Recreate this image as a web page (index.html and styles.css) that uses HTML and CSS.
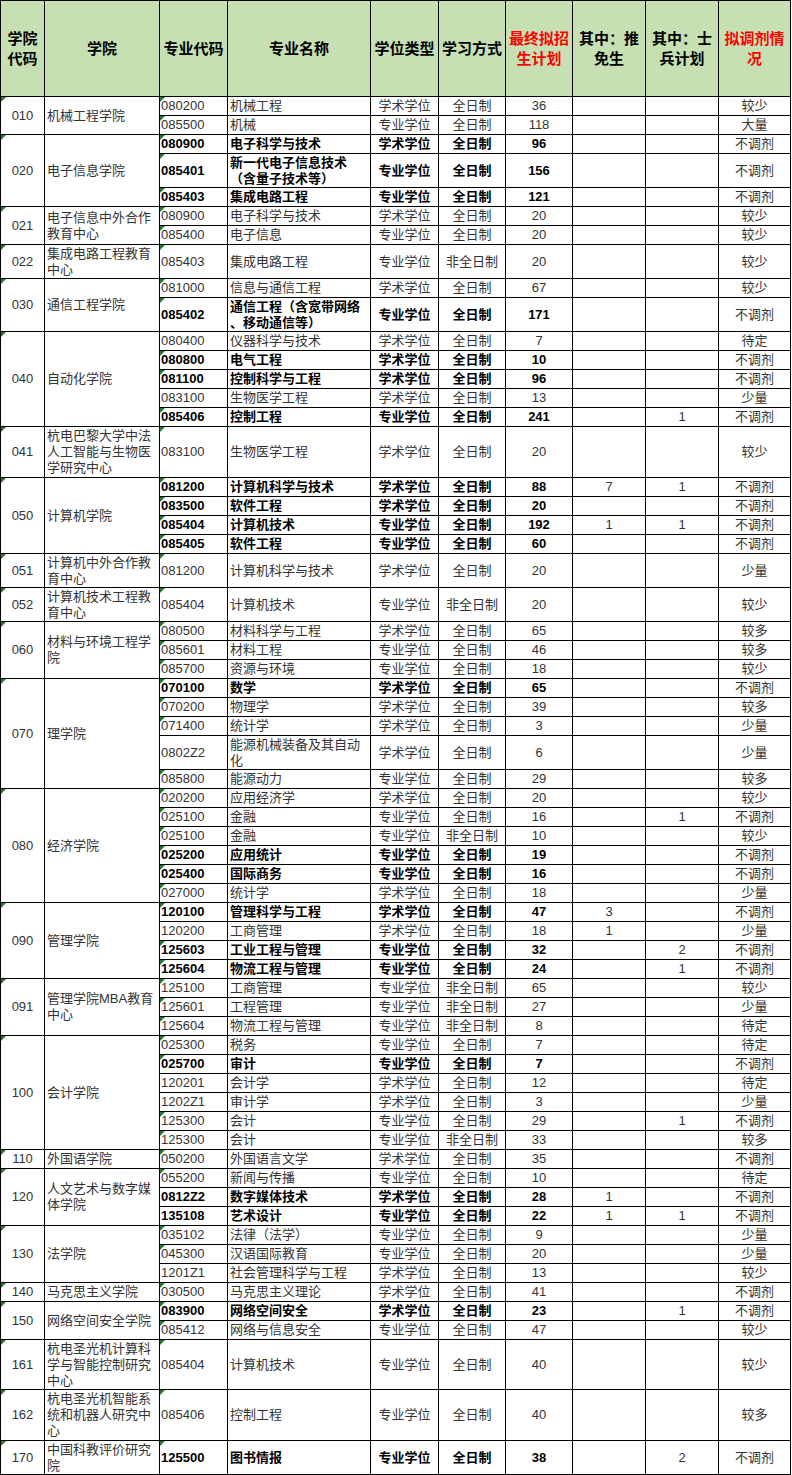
FILE: index.html
```html
<!DOCTYPE html>
<html lang="zh-CN">
<head>
<meta charset="utf-8">
<title>招生计划</title>
<link rel="stylesheet" href="styles.css">
</head>
<body>
<div class="g">
  <div class="h">学院<br>代码</div>
  <div class="h">学院</div>
  <div class="h">专业代码</div>
  <div class="h">专业名称</div>
  <div class="h">学位类型</div>
  <div class="h">学习方式</div>
  <div class="h red">最终拟招<br>生计划</div>
  <div class="h">其中：推<br>免生</div>
  <div class="h">其中：士<br>兵计划</div>
  <div class="h red">拟调剂情<br>况</div>

  <!-- 010 -->
  <div class="k tri r2">010</div><div class="n r2">机械工程学院</div>
  <div class="c tri">080200</div><div class="m">机械工程</div><div class="x">学术学位</div><div class="x">全日制</div><div class="x">36</div><div class="x"></div><div class="x"></div><div class="x">较少</div>
  <div class="c tri">085500</div><div class="m">机械</div><div class="x">专业学位</div><div class="x">全日制</div><div class="x">118</div><div class="x"></div><div class="x"></div><div class="x">大量</div>

  <!-- 020 -->
  <div class="k tri r3">020</div><div class="n r3">电子信息学院</div>
  <div class="c tri b">080900</div><div class="m b">电子科学与技术</div><div class="x b">学术学位</div><div class="x b">全日制</div><div class="x b">96</div><div class="x"></div><div class="x"></div><div class="x">不调剂</div>
  <div class="c tri b h2">085401</div><div class="m b w">新一代电子信息技术<br>（含量子技术等）</div><div class="x b">专业学位</div><div class="x b">全日制</div><div class="x b">156</div><div class="x"></div><div class="x"></div><div class="x">不调剂</div>
  <div class="c tri b">085403</div><div class="m b">集成电路工程</div><div class="x b">专业学位</div><div class="x b">全日制</div><div class="x b">121</div><div class="x"></div><div class="x"></div><div class="x">不调剂</div>

  <!-- 021 -->
  <div class="k tri r2">021</div><div class="n w r2">电子信息中外合作<br>教育中心</div>
  <div class="c tri">080900</div><div class="m">电子科学与技术</div><div class="x">学术学位</div><div class="x">全日制</div><div class="x">20</div><div class="x"></div><div class="x"></div><div class="x">较少</div>
  <div class="c tri">085400</div><div class="m">电子信息</div><div class="x">专业学位</div><div class="x">全日制</div><div class="x">20</div><div class="x"></div><div class="x"></div><div class="x">较少</div>

  <!-- 022 -->
  <div class="k tri">022</div><div class="n w">集成电路工程教育<br>中心</div>
  <div class="c tri h2">085403</div><div class="m">集成电路工程</div><div class="x">专业学位</div><div class="x">非全日制</div><div class="x">20</div><div class="x"></div><div class="x"></div><div class="x">较少</div>

  <!-- 030 -->
  <div class="k tri r2">030</div><div class="n r2">通信工程学院</div>
  <div class="c tri">081000</div><div class="m">信息与通信工程</div><div class="x">学术学位</div><div class="x">全日制</div><div class="x">67</div><div class="x"></div><div class="x"></div><div class="x">较少</div>
  <div class="c tri b h2">085402</div><div class="m b w">通信工程（含宽带网络<br>、移动通信等）</div><div class="x b">专业学位</div><div class="x b">全日制</div><div class="x b">171</div><div class="x"></div><div class="x"></div><div class="x">不调剂</div>

  <!-- 040 -->
  <div class="k tri r5">040</div><div class="n r5">自动化学院</div>
  <div class="c">080400</div><div class="m">仪器科学与技术</div><div class="x">学术学位</div><div class="x">全日制</div><div class="x">7</div><div class="x"></div><div class="x"></div><div class="x">待定</div>
  <div class="c tri b">080800</div><div class="m b">电气工程</div><div class="x b">学术学位</div><div class="x b">全日制</div><div class="x b">10</div><div class="x"></div><div class="x"></div><div class="x">不调剂</div>
  <div class="c tri b">081100</div><div class="m b">控制科学与工程</div><div class="x b">学术学位</div><div class="x b">全日制</div><div class="x b">96</div><div class="x"></div><div class="x"></div><div class="x">不调剂</div>
  <div class="c">083100</div><div class="m">生物医学工程</div><div class="x">学术学位</div><div class="x">全日制</div><div class="x">13</div><div class="x"></div><div class="x"></div><div class="x">少量</div>
  <div class="c tri b">085406</div><div class="m b">控制工程</div><div class="x b">专业学位</div><div class="x b">全日制</div><div class="x b">241</div><div class="x"></div><div class="x">1</div><div class="x">不调剂</div>

  <!-- 041 -->
  <div class="k tri">041</div><div class="n w">杭电巴黎大学中法<br>人工智能与生物医<br>学研究中心</div>
  <div class="c tri h3">083100</div><div class="m">生物医学工程</div><div class="x">学术学位</div><div class="x">全日制</div><div class="x">20</div><div class="x"></div><div class="x"></div><div class="x">较少</div>

  <!-- 050 -->
  <div class="k tri r4">050</div><div class="n r4">计算机学院</div>
  <div class="c tri b">081200</div><div class="m b">计算机科学与技术</div><div class="x b">学术学位</div><div class="x b">全日制</div><div class="x b">88</div><div class="x">7</div><div class="x">1</div><div class="x">不调剂</div>
  <div class="c tri b">083500</div><div class="m b">软件工程</div><div class="x b">学术学位</div><div class="x b">全日制</div><div class="x b">20</div><div class="x"></div><div class="x"></div><div class="x">不调剂</div>
  <div class="c tri b">085404</div><div class="m b">计算机技术</div><div class="x b">专业学位</div><div class="x b">全日制</div><div class="x b">192</div><div class="x">1</div><div class="x">1</div><div class="x">不调剂</div>
  <div class="c tri b">085405</div><div class="m b">软件工程</div><div class="x b">专业学位</div><div class="x b">全日制</div><div class="x b">60</div><div class="x"></div><div class="x"></div><div class="x">不调剂</div>

  <!-- 051 -->
  <div class="k tri">051</div><div class="n w">计算机中外合作教<br>育中心</div>
  <div class="c tri h2">081200</div><div class="m">计算机科学与技术</div><div class="x">学术学位</div><div class="x">全日制</div><div class="x">20</div><div class="x"></div><div class="x"></div><div class="x">少量</div>

  <!-- 052 -->
  <div class="k tri">052</div><div class="n w">计算机技术工程教<br>育中心</div>
  <div class="c tri h2">085404</div><div class="m">计算机技术</div><div class="x">专业学位</div><div class="x">非全日制</div><div class="x">20</div><div class="x"></div><div class="x"></div><div class="x">较少</div>

  <!-- 060 -->
  <div class="k tri r3">060</div><div class="n w r3">材料与环境工程学<br>院</div>
  <div class="c tri">080500</div><div class="m">材料科学与工程</div><div class="x">学术学位</div><div class="x">全日制</div><div class="x">65</div><div class="x"></div><div class="x"></div><div class="x">较多</div>
  <div class="c tri">085601</div><div class="m">材料工程</div><div class="x">专业学位</div><div class="x">全日制</div><div class="x">46</div><div class="x"></div><div class="x"></div><div class="x">较多</div>
  <div class="c tri">085700</div><div class="m">资源与环境</div><div class="x">专业学位</div><div class="x">全日制</div><div class="x">18</div><div class="x"></div><div class="x"></div><div class="x">较少</div>

  <!-- 070 -->
  <div class="k tri r5">070</div><div class="n r5">理学院</div>
  <div class="c tri b">070100</div><div class="m b">数学</div><div class="x b">学术学位</div><div class="x b">全日制</div><div class="x b">65</div><div class="x"></div><div class="x"></div><div class="x">不调剂</div>
  <div class="c tri">070200</div><div class="m">物理学</div><div class="x">学术学位</div><div class="x">全日制</div><div class="x">39</div><div class="x"></div><div class="x"></div><div class="x">较多</div>
  <div class="c tri">071400</div><div class="m">统计学</div><div class="x">学术学位</div><div class="x">全日制</div><div class="x">3</div><div class="x"></div><div class="x"></div><div class="x">少量</div>
  <div class="c h2">0802Z2</div><div class="m w">能源机械装备及其自动<br>化</div><div class="x">学术学位</div><div class="x">全日制</div><div class="x">6</div><div class="x"></div><div class="x"></div><div class="x">少量</div>
  <div class="c tri">085800</div><div class="m">能源动力</div><div class="x">专业学位</div><div class="x">全日制</div><div class="x">29</div><div class="x"></div><div class="x"></div><div class="x">较多</div>

  <!-- 080 -->
  <div class="k tri r6">080</div><div class="n r6">经济学院</div>
  <div class="c tri">020200</div><div class="m">应用经济学</div><div class="x">学术学位</div><div class="x">全日制</div><div class="x">20</div><div class="x"></div><div class="x"></div><div class="x">较少</div>
  <div class="c tri">025100</div><div class="m">金融</div><div class="x">专业学位</div><div class="x">全日制</div><div class="x">16</div><div class="x"></div><div class="x">1</div><div class="x">不调剂</div>
  <div class="c tri">025100</div><div class="m">金融</div><div class="x">专业学位</div><div class="x">非全日制</div><div class="x">10</div><div class="x"></div><div class="x"></div><div class="x">较少</div>
  <div class="c tri b">025200</div><div class="m b">应用统计</div><div class="x b">专业学位</div><div class="x b">全日制</div><div class="x b">19</div><div class="x"></div><div class="x"></div><div class="x">不调剂</div>
  <div class="c tri b">025400</div><div class="m b">国际商务</div><div class="x b">专业学位</div><div class="x b">全日制</div><div class="x b">16</div><div class="x"></div><div class="x"></div><div class="x">不调剂</div>
  <div class="c tri">027000</div><div class="m">统计学</div><div class="x">学术学位</div><div class="x">全日制</div><div class="x">18</div><div class="x"></div><div class="x"></div><div class="x">少量</div>

  <!-- 090 -->
  <div class="k tri r4">090</div><div class="n r4">管理学院</div>
  <div class="c tri b">120100</div><div class="m b">管理科学与工程</div><div class="x b">学术学位</div><div class="x b">全日制</div><div class="x b">47</div><div class="x">3</div><div class="x"></div><div class="x">不调剂</div>
  <div class="c">120200</div><div class="m">工商管理</div><div class="x">学术学位</div><div class="x">全日制</div><div class="x">18</div><div class="x">1</div><div class="x"></div><div class="x">少量</div>
  <div class="c tri b">125603</div><div class="m b">工业工程与管理</div><div class="x b">专业学位</div><div class="x b">全日制</div><div class="x b">32</div><div class="x"></div><div class="x">2</div><div class="x">不调剂</div>
  <div class="c tri b">125604</div><div class="m b">物流工程与管理</div><div class="x b">专业学位</div><div class="x b">全日制</div><div class="x b">24</div><div class="x"></div><div class="x">1</div><div class="x">不调剂</div>

  <!-- 091 -->
  <div class="k tri r3">091</div><div class="n w r3">管理学院MBA教育<br>中心</div>
  <div class="c tri">125100</div><div class="m">工商管理</div><div class="x">专业学位</div><div class="x">非全日制</div><div class="x">65</div><div class="x"></div><div class="x"></div><div class="x">较少</div>
  <div class="c tri">125601</div><div class="m">工程管理</div><div class="x">专业学位</div><div class="x">非全日制</div><div class="x">27</div><div class="x"></div><div class="x"></div><div class="x">少量</div>
  <div class="c tri">125604</div><div class="m">物流工程与管理</div><div class="x">专业学位</div><div class="x">非全日制</div><div class="x">8</div><div class="x"></div><div class="x"></div><div class="x">待定</div>

  <!-- 100 -->
  <div class="k tri r6">100</div><div class="n r6">会计学院</div>
  <div class="c tri">025300</div><div class="m">税务</div><div class="x">专业学位</div><div class="x">全日制</div><div class="x">7</div><div class="x"></div><div class="x"></div><div class="x">待定</div>
  <div class="c tri b">025700</div><div class="m b">审计</div><div class="x b">专业学位</div><div class="x b">全日制</div><div class="x b">7</div><div class="x"></div><div class="x"></div><div class="x">不调剂</div>
  <div class="c">120201</div><div class="m">会计学</div><div class="x">学术学位</div><div class="x">全日制</div><div class="x">12</div><div class="x"></div><div class="x"></div><div class="x">待定</div>
  <div class="c">1202Z1</div><div class="m">审计学</div><div class="x">学术学位</div><div class="x">全日制</div><div class="x">3</div><div class="x"></div><div class="x"></div><div class="x">少量</div>
  <div class="c tri">125300</div><div class="m">会计</div><div class="x">专业学位</div><div class="x">全日制</div><div class="x">29</div><div class="x"></div><div class="x">1</div><div class="x">不调剂</div>
  <div class="c tri">125300</div><div class="m">会计</div><div class="x">专业学位</div><div class="x">非全日制</div><div class="x">33</div><div class="x"></div><div class="x"></div><div class="x">较多</div>

  <!-- 110 -->
  <div class="k tri">110</div><div class="n">外国语学院</div>
  <div class="c tri">050200</div><div class="m">外国语言文学</div><div class="x">学术学位</div><div class="x">全日制</div><div class="x">35</div><div class="x"></div><div class="x"></div><div class="x">不调剂</div>

  <!-- 120 -->
  <div class="k tri r3">120</div><div class="n w r3">人文艺术与数字媒<br>体学院</div>
  <div class="c tri">055200</div><div class="m">新闻与传播</div><div class="x">专业学位</div><div class="x">全日制</div><div class="x">10</div><div class="x"></div><div class="x"></div><div class="x">待定</div>
  <div class="c b">0812Z2</div><div class="m b">数字媒体技术</div><div class="x b">学术学位</div><div class="x b">全日制</div><div class="x b">28</div><div class="x">1</div><div class="x"></div><div class="x">不调剂</div>
  <div class="c b">135108</div><div class="m b">艺术设计</div><div class="x b">专业学位</div><div class="x b">全日制</div><div class="x b">22</div><div class="x">1</div><div class="x">1</div><div class="x">不调剂</div>

  <!-- 130 -->
  <div class="k tri r3">130</div><div class="n r3">法学院</div>
  <div class="c tri">035102</div><div class="m">法律（法学）</div><div class="x">专业学位</div><div class="x">全日制</div><div class="x">9</div><div class="x"></div><div class="x"></div><div class="x">少量</div>
  <div class="c tri">045300</div><div class="m">汉语国际教育</div><div class="x">专业学位</div><div class="x">全日制</div><div class="x">20</div><div class="x"></div><div class="x"></div><div class="x">少量</div>
  <div class="c">1201Z1</div><div class="m">社会管理科学与工程</div><div class="x">学术学位</div><div class="x">全日制</div><div class="x">13</div><div class="x"></div><div class="x"></div><div class="x">较少</div>

  <!-- 140 -->
  <div class="k tri">140</div><div class="n">马克思主义学院</div>
  <div class="c tri">030500</div><div class="m">马克思主义理论</div><div class="x">学术学位</div><div class="x">全日制</div><div class="x">41</div><div class="x"></div><div class="x"></div><div class="x">不调剂</div>

  <!-- 150 -->
  <div class="k tri r2">150</div><div class="n r2">网络空间安全学院</div>
  <div class="c tri b">083900</div><div class="m b">网络空间安全</div><div class="x b">学术学位</div><div class="x b">全日制</div><div class="x b">23</div><div class="x"></div><div class="x">1</div><div class="x">不调剂</div>
  <div class="c tri">085412</div><div class="m">网络与信息安全</div><div class="x">专业学位</div><div class="x">全日制</div><div class="x">47</div><div class="x"></div><div class="x"></div><div class="x">较少</div>

  <!-- 161 -->
  <div class="k tri">161</div><div class="n w">杭电圣光机计算科<br>学与智能控制研究<br>中心</div>
  <div class="c tri h3s">085404</div><div class="m">计算机技术</div><div class="x">专业学位</div><div class="x">全日制</div><div class="x">40</div><div class="x"></div><div class="x"></div><div class="x">较少</div>

  <!-- 162 -->
  <div class="k tri">162</div><div class="n w">杭电圣光机智能系<br>统和机器人研究中<br>心</div>
  <div class="c tri h3">085406</div><div class="m">控制工程</div><div class="x">专业学位</div><div class="x">全日制</div><div class="x">40</div><div class="x"></div><div class="x"></div><div class="x">较多</div>

  <!-- 170 -->
  <div class="k tri">170</div><div class="n w">中国科教评价研究<br>院</div>
  <div class="c tri b h2">125500</div><div class="m b">图书情报</div><div class="x b">专业学位</div><div class="x b">全日制</div><div class="x b">38</div><div class="x"></div><div class="x">2</div><div class="x">不调剂</div>
</div>
</body>
</html>
```

FILE: styles.css
```css
* {
  box-sizing: border-box;
}

body {
  margin: 0;
  background: #ffffff;
  font-family: "Liberation Sans", "Noto Sans CJK SC", sans-serif;
  font-size: 13px;
  color: #333333;
}

.g {
  display: grid;
  grid-template-columns: 43px 114px 67px 142px 67px 66px 66px 72px 72px 71px;
  gap: 1px;
  background: #000000;
  border: 1px solid #000000;
  width: max-content;
}

.g > div {
  background: #ffffff;
  display: flex;
  align-items: center;
  line-height: 18px;
  min-width: 0;
  position: relative;
  white-space: nowrap;
}

.g > .h {
  background: #c6e0b4;
  height: 95px;
  justify-content: center;
  text-align: center;
  font-size: 15px;
  font-weight: bold;
  color: #000000;
  line-height: 20px;
}

.g > .red {
  color: #ff0000;
}

.k {
  justify-content: center;
}

.n {
  padding-left: 2px;
}

.g > .w {
  line-height: 16px;
}

.c {
  padding-left: 1px;
  height: 18px;
}

.c.h2 {
  height: 33px;
}

.c.h3 {
  height: 50px;
}

.c.h3s {
  height: 49px;
}

.m {
  padding-left: 2px;
}

.x {
  justify-content: center;
  text-align: center;
}

.b {
  font-weight: bold;
  color: #000000;
}

.r2 { grid-row: span 2; }
.r3 { grid-row: span 3; }
.r4 { grid-row: span 4; }
.r5 { grid-row: span 5; }
.r6 { grid-row: span 6; }

.tri::before {
  content: "";
  position: absolute;
  top: 0;
  left: 0;
  border-style: solid;
  border-width: 5px 5px 0 0;
  border-color: #1f7a2e transparent transparent transparent;
}
```
